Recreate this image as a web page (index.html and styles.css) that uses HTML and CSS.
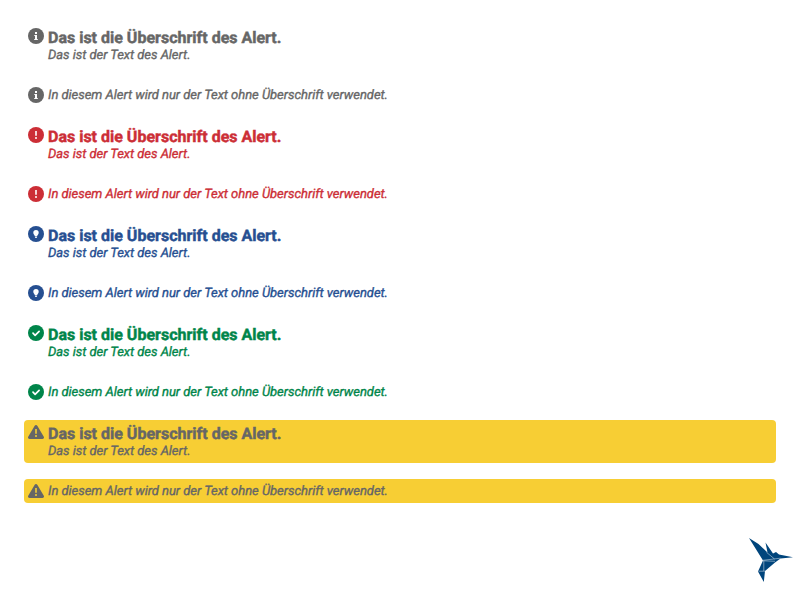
FILE: index.html
```html
<!DOCTYPE html>
<html lang="de">
<head>
<meta charset="utf-8">
<title>Alert</title>
<link rel="stylesheet" href="styles.css">
</head>
<body>
<svg width="0" height="0" class="defs" aria-hidden="true">
<symbol id="info" viewBox="0 0 16 16"><circle cx="8" cy="8" r="8" fill="currentColor"/><path fill="#fff" d="M7 4h2v2H7zM6.3 7H9v4h.8v1.1H6.2V11H7V8.1h-.7z"/></symbol>
<symbol id="error" viewBox="0 0 16 16"><circle cx="8" cy="8" r="8" fill="currentColor"/><path fill="#fff" d="M7.200 4h1.600v4.800H7.200z"/><circle cx="8" cy="11" r="1" fill="#fff"/></symbol>
<symbol id="hint" viewBox="0 0 16 16"><circle cx="8" cy="8" r="8" fill="currentColor"/><path fill="#fff" d="M8 4a2.700 2.700 0 0 0-2.700 2.700c0 1.400 1.200 2 1.500 3.200h2.400c.3-1.200 1.500-1.800 1.500-3.200A2.700 2.700 0 0 0 8 4zM6.900 10.600h2.200v.4a1.100 1.100 0 0 1-2.200 0z"/></symbol>
<symbol id="success" viewBox="0 0 16 16"><circle cx="8" cy="8" r="8" fill="currentColor"/><path fill="none" stroke="#fff" stroke-width="1.7" stroke-linecap="round" stroke-linejoin="round" d="M5 8.200l2.100 2.100 4-4"/></symbol>
<symbol id="warning" viewBox="0 0 16 16"><path fill="currentColor" d="M6.700 1.700a1.500 1.500 0 0 1 2.600 0l6.500 11.100a1.500 1.500 0 0 1-1.300 2.200H1.500a1.500 1.500 0 0 1-1.300-2.200z"/><path fill="#f7ce34" d="M7.200 5h1.600v4.700H7.200z"/><circle cx="8" cy="12" r="1" fill="#f7ce34"/></symbol>
</svg>
<main class="alerts">
<div class="alert default"><svg class="icon"><use href="#info"/></svg><div class="body"><strong>Das ist die Überschrift des Alert.</strong><p>Das ist der Text des Alert.</p></div></div>
<div class="alert default single"><svg class="icon"><use href="#info"/></svg><p>In diesem Alert wird nur der Text ohne Überschrift verwendet.</p></div>
<div class="alert error"><svg class="icon"><use href="#error"/></svg><div class="body"><strong>Das ist die Überschrift des Alert.</strong><p>Das ist der Text des Alert.</p></div></div>
<div class="alert error single"><svg class="icon"><use href="#error"/></svg><p>In diesem Alert wird nur der Text ohne Überschrift verwendet.</p></div>
<div class="alert info"><svg class="icon"><use href="#hint"/></svg><div class="body"><strong>Das ist die Überschrift des Alert.</strong><p>Das ist der Text des Alert.</p></div></div>
<div class="alert info single"><svg class="icon"><use href="#hint"/></svg><p>In diesem Alert wird nur der Text ohne Überschrift verwendet.</p></div>
<div class="alert success"><svg class="icon"><use href="#success"/></svg><div class="body"><strong>Das ist die Überschrift des Alert.</strong><p>Das ist der Text des Alert.</p></div></div>
<div class="alert success single"><svg class="icon"><use href="#success"/></svg><p>In diesem Alert wird nur der Text ohne Überschrift verwendet.</p></div>
<div class="alert warning"><svg class="icon"><use href="#warning"/></svg><div class="body"><strong>Das ist die Überschrift des Alert.</strong><p>Das ist der Text des Alert.</p></div></div>
<div class="alert warning single"><svg class="icon"><use href="#warning"/></svg><p>In diesem Alert wird nur der Text ohne Überschrift verwendet.</p></div>
</main>
<svg class="logo" viewBox="0 0 44 44"><path fill="#00457c" d="M0 0L9.500 6L18.500 14.500L16.500 4.500L24 15.500L27 14L30 16.500L44 19.300L31.500 20.500L26 24.500L16 33L14.800 44L9 33.500L14 22.500z"/><path fill="none" stroke="#fff" stroke-width=".45" d="M14 22.300L31.500 20.200M17.500 14.300L25.500 21M14 22.800L26 23.300M14.800 23v10M9.500 33.200h7"/></svg>
</body>
</html>
```
FILE: styles.css
```css
body { margin: 0; padding: 24px; font-family: Roboto, sans-serif; text-rendering: geometricPrecision; }
.defs { position: absolute; }
.alerts { display: flex; flex-direction: column; gap: 16px; }
.alert { display: flex; gap: 4px; padding: 4px; height: 35px; border-radius: 4px; }
.alert.single { height: 16px; align-items: center; }
.icon { width: 16px; height: 16px; flex: none; }
.body { display: flex; flex-direction: column; }
strong { font-size: 16px; line-height: 19px; font-weight: 700; -webkit-text-stroke: .45px currentColor; }
p { margin: 0; padding-top: 1px; font-size: 13px; line-height: 16px; font-style: italic; font-weight: 400; letter-spacing: -.035px; -webkit-text-stroke: .35px currentColor; }
.single p { padding-top: 2px; }
.default { color: #666; }
.error { color: #cc2e36; }
.info { color: #264f91; }
.success { color: #00854a; }
.warning { color: #666; background: #f7ce34; }
.logo { position: absolute; left: 749px; top: 538px; width: 44px; height: 44px; }
```
